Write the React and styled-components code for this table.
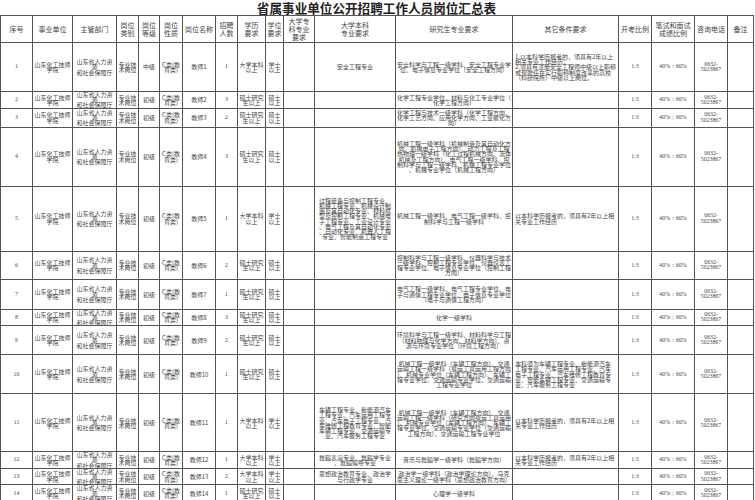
import React from 'react';
import styled, { createGlobalStyle } from 'styled-components';

const Global = createGlobalStyle`
  html, body { margin: 0; padding: 0; background: #fff; }
  body { font-family: "Noto Sans CJK SC", sans-serif; color: #444; }
`;

const Page = styled.div`
  width: 755px;
  height: 500px;
  overflow: hidden;
  background: #fff;
`;

const Title = styled.h1`
  margin: 0;
  width: 753px;
  height: 15px;
  line-height: 15px;
  text-align: center;
  font-size: 12.6px;
  font-weight: 700;
  color: #222;
  font-family: "Noto Sans CJK SC", serif;
`;

const Table = styled.table`
  width: 753px;
  table-layout: fixed;
  border-collapse: collapse;
`;

const Row = styled.tr`
  height: ${(p) => p.$h}px;
`;

const Head = styled.th`
  border: 1px solid #555;
  font-weight: 400;
  font-size: 7px;
  line-height: 8px;
  color: #444;
  padding: 0;
  text-align: center;
  vertical-align: middle;
  font-family: "Noto Sans CJK SC", sans-serif;
`;

const Cell = styled.td`
  border: 1px solid #555;
  font-size: ${(p) => (p.$num ? 5.8 : 6)}px;
  line-height: 5.2px;
  color: #444;
  padding: 0 ${(p) => (p.$pad != null ? p.$pad : 1)}px;
  text-align: ${(p) => (p.$left ? 'left' : 'center')};
  vertical-align: middle;
  font-family: ${(p) =>
    p.$num ? '"Liberation Serif", serif' : '"Noto Sans CJK SC", sans-serif'};
  line-break: anywhere;
  overflow: hidden;
`;

const widths = [32, 40, 44, 22, 21, 23, 33, 22, 28, 18, 31, 81, 117, 106, 33, 43, 33, 26];

const headers = [
  ['序号'], ['事业单位'], ['主管部门'], ['岗位', '类别'], ['岗位', '等级'], ['岗位', '性质'],
  ['岗位名称'], ['招聘', '人数'], ['学历', '要求'], ['学位', '要求'], ['大学专', '科专业', '要求'],
  ['大学本科', '专业要求'], ['研究生专业要求'], ['其它条件要求'], ['开考比例'],
  ['笔试和面试', '成绩比例'], ['咨询电话'], ['备注'],
];

const EXP = '以本科学历报考的，须具有2年以上相关专业工作经历';

const rows = [
  { h: 49, lvl: '中级', cnt: 1, edu: 'b', ben: '安全工程专业',
    yan: '安全科学与工程一级学科、安全工程专业学位、电子信息专业学位（安全工程方向）',
    other: ['1.以本科学历报考的，须具有2年以上相关专业工作经历；', '2.须具有注册安全工程师中级以上职称或现聘任在实行职称制度改革的高校（科研院所）中级以上岗位。'] },
  { h: 13, cnt: 3, edu: 'm', yan: '化学工程专业学位、材料与化工专业学位（化学工程方向）' },
  { h: 19, cnt: 2, edu: 'm', yan: '化学工程与技术一级学科（化学工程方向、化学工艺方向、应用化学方向、工业催化方向）' },
  { h: 59, cnt: 3, edu: 'm', yan: '机械工程一级学科（机械制造及其自动化方向、机械电子工程方向）、动力工程及工程热物理一级学科（化工过程机械方向、流体机械及工程方向）、电气工程一级学科、控制科学与工程一级学科、机械工程专业学位、机械专业学位（机械工程方向）' },
  { h: 65, cnt: 1, edu: 'b',
    ben: '过程装备与控制工程专业、机械工程专业、机械设计制造及其自动化专业、材料成型及控制工程专业、机械电子工程专业、工业设计专业、电气工程及其自动化专业、自动化专业、机器人工程专业、智能制造工程专业',
    yan: '机械工程一级学科、电气工程一级学科、控制科学与工程一级学科', other: [EXP] },
  { h: 28, cnt: 2, edu: 'm', yan: '控制科学与工程一级学科、仪器科学与技术一级学科、控制工程专业学位、仪器仪表工程专业学位、电子信息专业学位（控制工程方向）' },
  { h: 30, cnt: 1, edu: 'm', yan: '电气工程一级学科、电气工程专业学位、电子与通信工程专业学位、电子信息专业学位（电子与通信工程方向）' },
  { h: 14, cnt: 3, edu: 'm', yan: '化学一级学科' },
  { h: 29, cnt: 2, edu: 'm', yan: '环境科学与工程一级学科、材料科学与工程（材料物理与化学方向、材料学方向）、资源与环境专业学位（环境工程方向）' },
  { h: 39, cnt: 1, edu: 'm',
    yan: '机械工程一级学科（车辆工程方向）、交通运输工程一级学科（载运工具运用工程方向）、机械专业学位（车辆工程方向）、车辆工程专业学位、交通运输专业学位、交通运输工程专业学位',
    other: ['本科须为车辆工程专业、新能源汽车工程专业、汽车运用工程专业、汽车电子工程专业、汽车维修工程教育专业、智能车辆工程专业、交通运输专业、汽车服务工程专业'] },
  { h: 58, cnt: 1, edu: 'b',
    ben: '车辆工程专业、新能源汽车工程专业、汽车运用工程专业、汽车电子工程专业、汽车维修工程教育专业、智能车辆工程专业、交通运输专业、汽车服务工程专业',
    yan: '机械工程一级学科（车辆工程方向）、交通运输工程一级学科（研究方向载运工具运用）、机械专业学位（车辆工程方向）、车辆工程专业学位、交通运输专业学位（交通运输工程方向）、交通运输工程专业学位',
    other: [EXP] },
  { h: 14, cnt: 1, edu: 'b', ben: '舞蹈表演专业、舞蹈学专业、舞蹈编导专业',
    yan: '音乐与舞蹈学一级学科（舞蹈学方向）', other: [EXP] },
  { h: 12, cnt: 2, edu: 'b', ben: '思想政治教育专业、政治学与行政学专业',
    yan: '政治学一级学科（政治学理论方向）、马克思主义理论一级学科（思想政治教育方向）' },
  { h: 13, cnt: 1, edu: 'm', yan: '心理学一级学科' },
];

const Lines = ({ items }) =>
  items.map((t, i) => (
    <React.Fragment key={i}>
      {i > 0 && <br />}
      {t}
    </React.Fragment>
  ));

export default function App() {
  return (
    <Page>
      <Global />
      <Title>省属事业单位公开招聘工作人员岗位汇总表</Title>
      <Table>
        <colgroup>
          {widths.map((w, i) => (
            <col key={i} style={{ width: w }} />
          ))}
        </colgroup>
        <thead>
          <Row $h={27}>
            {headers.map((h, i) => (
              <Head key={i}>
                <Lines items={h} />
              </Head>
            ))}
          </Row>
        </thead>
        <tbody>
          {rows.map((r, i) => (
            <Row key={i} $h={r.h}>
              <Cell $num>{i + 1}</Cell>
              <Cell><Lines items={['山东化工技师', '学院']} /></Cell>
              <Cell><Lines items={['山东省人力资源', '和社会保障厅']} /></Cell>
              <Cell><Lines items={['专业技', '术岗位']} /></Cell>
              <Cell>{r.lvl || '初级'}</Cell>
              <Cell><Lines items={['C类(教', '育类)']} /></Cell>
              <Cell>{'教师' + (i + 1)}</Cell>
              <Cell $num>{r.cnt}</Cell>
              <Cell>
                <Lines items={r.edu === 'b' ? ['大学本科', '以上'] : ['硕士研究', '生以上']} />
              </Cell>
              <Cell>
                <Lines items={r.edu === 'b' ? ['学士', '以上'] : ['硕士', '以上']} />
              </Cell>
              <Cell />
              <Cell $pad={2}>{r.ben || ''}</Cell>
              <Cell $pad={1}>{r.yan}</Cell>
              <Cell $left $pad={2}>{r.other ? <Lines items={r.other} /> : ''}</Cell>
              <Cell $num>1:3</Cell>
              <Cell $num>40%：60%</Cell>
              <Cell $num><Lines items={['0632-', '5023867']} /></Cell>
              <Cell />
            </Row>
          ))}
        </tbody>
      </Table>
    </Page>
  );
}
